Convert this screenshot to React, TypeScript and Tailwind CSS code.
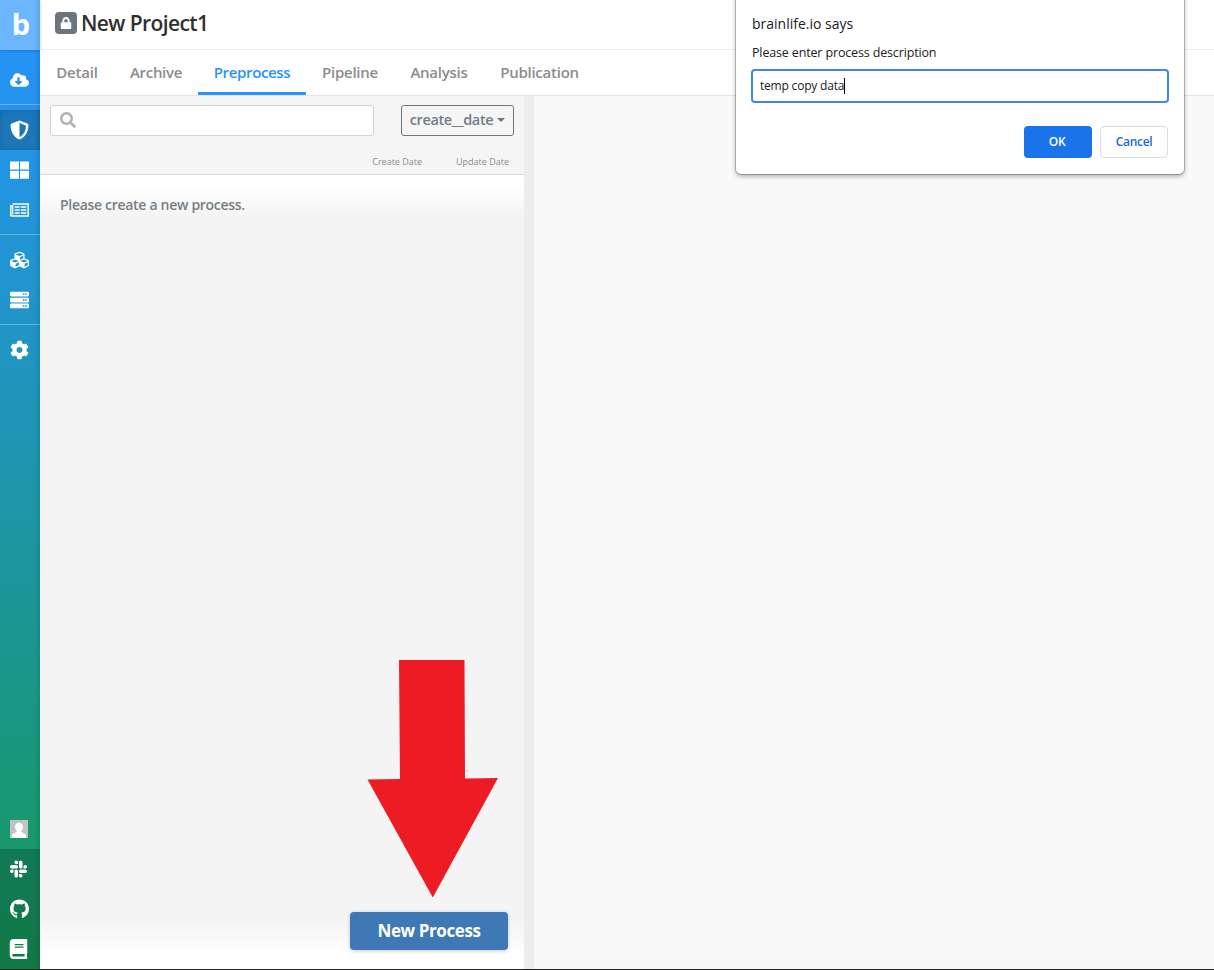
import React from "react";
import {
  FaCloudDownloadAlt, FaShieldAlt, FaCubes, FaServer,
  FaCog, FaLock, FaSearch, FaSlack, FaGithub, FaBook,
} from "react-icons/fa";

const tabs = [
  { label: "Detail", style: "w-[74px] tracking-[-0.15px]" },
  { label: "Archive", style: "w-[84px] tracking-[-0.3px]" },
  { label: "Preprocess", style: "w-[108px] tracking-[-0.35px]" },
  { label: "Pipeline", style: "w-[88px] tracking-[-0.25px]" },
  { label: "Analysis", style: "w-[90px] tracking-[-0.25px]" },
  { label: "Publication", style: "w-[111px] tracking-[-0.25px]" },
];

function Item({ children, className = "" }: { children: React.ReactNode; className?: string }) {
  return <a className={`flex h-10 shrink-0 items-center pl-[10px] text-white ${className}`}>{children}</a>;
}

function Sidebar() {
  return (
    <nav className="relative flex w-10 shrink-0 flex-col bg-[linear-gradient(to_bottom,#2693ff,#159957)]">
      <div className="flex h-[50px] shrink-0 items-center justify-center bg-[#6cb6ff] pb-[3px] pl-[2px] text-[29px] font-bold text-white shadow-[0_1px_3px_rgba(0,0,0,0.2)]">
        b
      </div>
      <div className="h-[55px] shrink-0 border-b border-white/30 pt-[10px]">
        <Item><FaCloudDownloadAlt className="h-5 w-[19px]" /></Item>
      </div>
      <div className="h-[130px] shrink-0 border-b border-white/30 pt-[5px]">
        <Item className="bg-black/20 shadow-[inset_0_0_5px_rgba(0,0,0,0.15)]"><FaShieldAlt className="h-5 w-[19px]" /></Item>
        <Item>
          <svg width="19" height="18" viewBox="0 0 19 18" fill="currentColor">
            <path d="M0 .5h9v8H0zM10 .5h9v8h-9zM0 9.700h9v8H0zM10 9.700h9v8h-9z" />
          </svg>
        </Item>
        <Item>
          <svg width="19" height="14" viewBox="0 0 19 14" fill="none" stroke="currentColor">
            <path d="M2.600 1h15.600v12H1.800c-.8 0-1.200-.5-1.200-1.200V2.800h2v8.700" strokeWidth="1.500" />
            <path d="M4.700 4h5M10.800 4h5.500M4.700 7h5M10.800 7h5.500M4.700 10h5M10.800 10h5.500" strokeWidth="1.500" />
          </svg>
        </Item>
      </div>
      <div className="h-[90px] shrink-0 border-b border-white/30 pt-[5px]">
        <Item><FaCubes className="h-5 w-[19px]" /></Item>
        <Item><FaServer className="h-5 w-[19px]" /></Item>
      </div>
      <div className="grow pt-[5px]">
        <Item><FaCog className="h-5 w-[19px]" /></Item>
      </div>
      <Item className="pb-px">
        <svg width="18" height="18" viewBox="0 0 18 18">
          <rect width="18" height="18" fill="#c3c3c3" />
          <path d="M9 2.700c2.600 0 4 1.800 4 4.100 0 1.800-.8 3.300-1.800 4.300 0 1.600 4.200 1.900 5 4.500V18H1.800v-2.400c.8-2.600 5-2.900 5-4.500C5.800 10.100 5 8.600 5 6.800c0-2.300 1.400-4.100 4-4.100z" fill="#fff" />
        </svg>
      </Item>
      <div className="h-[120px] shrink-0 bg-black/20">
        <Item><FaSlack className="h-5 w-[17px]" /></Item>
        <Item><FaGithub className="h-5 w-[19px]" /></Item>
        <Item><FaBook className="-ml-px h-5 w-[19px]" /></Item>
      </div>
      <div className="pointer-events-none absolute inset-y-0 right-0 w-[6px] bg-linear-to-r from-transparent to-black/10" />
    </nav>
  );
}

function Dialog() {
  return (
    <div className="absolute top-[-8px] left-[736px] h-[182px] w-[448px] rounded-[5px] bg-white px-[15px] pt-[21px] text-[#202124] shadow-[0_0_0_1px_rgba(0,0,0,0.2),0_2px_5px_rgba(0,0,0,0.35)]">
      <h2 className="pl-px text-[14px] leading-[21px]">brainlife.io says</h2>
      <p className="mt-[10px] pl-px text-[12.5px] leading-[18px] tracking-[-0.15px]">Please enter process description</p>
      <div className="mt-[7px] flex h-[34px] items-center rounded-[4px] border-2 border-[#4285f0] pl-[7px] text-[12px] tracking-[-0.2px]">
        <span>temp copy data</span>
        <span className="h-4 w-px bg-black" />
      </div>
      <div className="mt-[23px] flex justify-end gap-2 pr-px text-[12px] font-semibold tracking-[-0.3px]">
        <button className="h-8 w-[68px] rounded-[4px] bg-[#1a73e8] pr-[2px] text-white">OK</button>
        <button className="h-8 w-[68px] rounded-[4px] border border-[#dadce0] text-[#1a67e0]">Cancel</button>
      </div>
    </div>
  );
}

export default function App() {
  return (
    <div className="relative flex h-[970px] w-[1214px] flex-col overflow-hidden bg-white font-['Open_Sans','Noto_Sans',sans-serif]">
      <div className="flex min-h-0 grow">
        <Sidebar />
        <main className="flex min-w-0 grow flex-col">
          <header className="flex h-[50px] shrink-0 items-center border-b border-[#eeeeee] pb-[3px] pl-[15px]">
            <span className="flex size-[22px] items-center justify-center rounded-[4px] bg-[#6c757d] pb-px text-white">
              <FaLock size={12} />
            </span>
            <h1 className="ml-[4px] pt-[2px] text-[21px] font-semibold tracking-[-0.6px] whitespace-nowrap text-[#303030]">New Project1</h1>
          </header>
          <div className="flex h-[46px] shrink-0 border-b border-[#e5e5e5] text-[15px] font-semibold text-[#8c8c8c]">
            {tabs.map((t) => (
              <a
                key={t.label}
                className={`flex h-[45px] items-center justify-center border-b-[3px] pt-[3px] whitespace-nowrap ${t.style} ${
                  t.label === "Preprocess" ? "border-[#2693ff] text-[#2693ff]" : "border-transparent"
                }`}
              >
                {t.label}
              </a>
            ))}
          </div>
          <div className="flex min-h-0 grow bg-[#f9f9f9]">
            <section className="flex w-[484px] shrink-0 flex-col bg-[#f4f4f4]">
              <div className="h-[79px] shrink-0 border-b border-[#d9dadb] bg-[#f5f5f5]">
                <div className="flex justify-between pt-[9px] pr-[10px] pl-[10px]">
                  <div className="flex h-[31px] w-[324px] items-center rounded-[3px] border border-[#ced4da] bg-white pb-px pl-[9px] text-[#b3b3b3]">
                    <FaSearch size={16} />
                  </div>
                  <button className="flex h-[31px] w-[113px] items-center justify-center rounded-[3px] border border-[#6c757d] pb-px text-[14.5px] font-semibold tracking-[-0.4px] text-[#747c84]">
                    create__date
                    <span className="ml-[4px] border-x-[4px] border-t-[4px] border-x-transparent border-t-[#6c757d]" />
                  </button>
                </div>
                <div className="flex justify-end gap-[34px] pt-[18px] pr-[15px] text-[9px] leading-[15px] text-[#8c8c8c]">
                  <span>Create Date</span>
                  <span>Update Date</span>
                </div>
              </div>
              <div className="flex min-h-0 grow flex-col bg-[linear-gradient(to_bottom,#fff_0,#fff_12px,#f4f4f4_40px,#f4f4f4_calc(100%-50px),#fff_calc(100%-15px))]">
                <p className="pt-[19px] pl-[20px] text-[14px] leading-[21px] font-semibold tracking-[-0.3px] text-[#767e86]">Please create a new process.</p>
                <div className="mt-auto flex justify-end pr-[16px] pb-[19px]">
                  <button className="h-[38px] w-[158px] rounded-[4px] bg-[#3e78b5] text-[17px] font-bold tracking-[-0.4px] whitespace-nowrap text-white shadow-[0_1px_4px_rgba(0,0,0,0.2)]">
                    New Process
                  </button>
                </div>
              </div>
            </section>
            <div className="w-[10px] shrink-0 bg-[#ededed]" />
          </div>
        </main>
      </div>
      <div className="h-px shrink-0 bg-[#222]" />
      <svg className="absolute top-[659px] left-[366px]" width="134" height="240" viewBox="0 0 134 240">
        <path d="M33 1H98.500L99 119.500L132 119L66.800 238.500L1.500 120.500L34 120Z" fill="#ed1c24" />
      </svg>
      <Dialog />
    </div>
  );
}
